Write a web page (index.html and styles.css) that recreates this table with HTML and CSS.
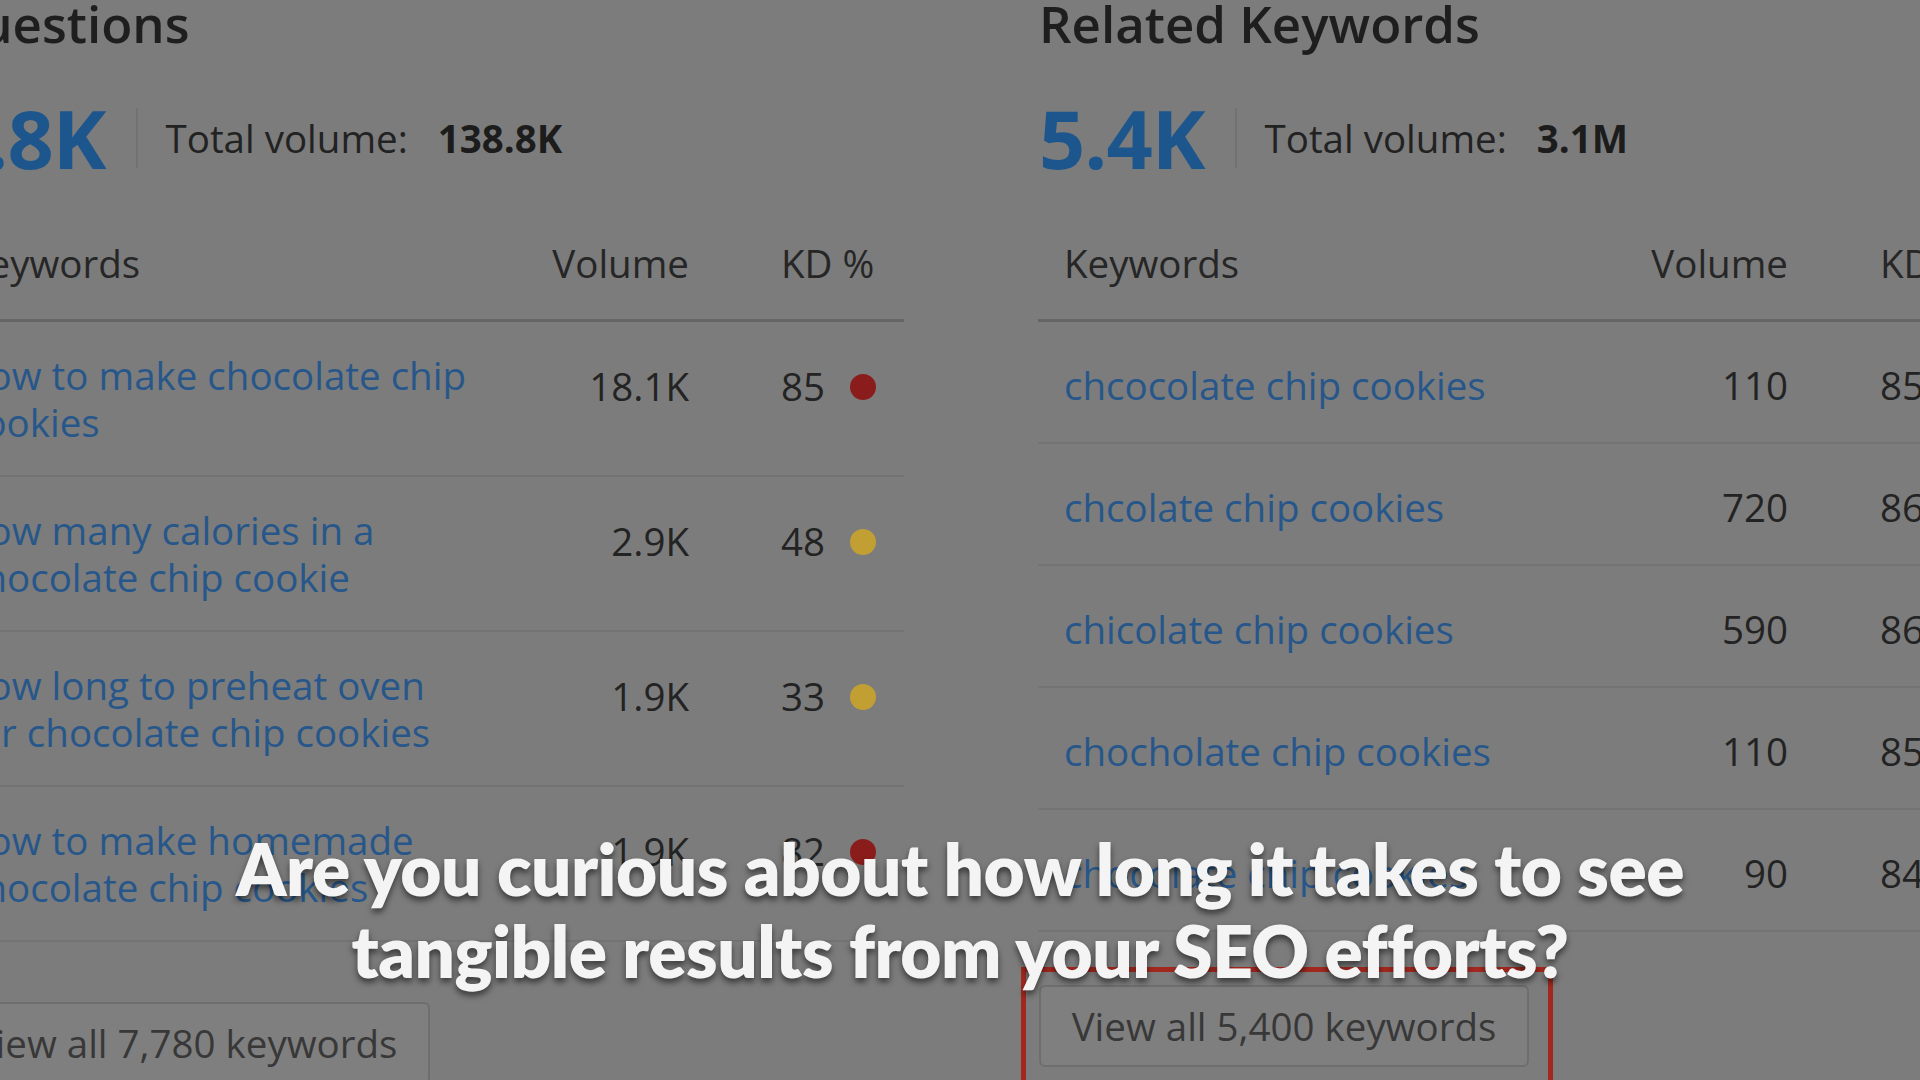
FILE: index.html
```html
<!DOCTYPE html>
<html lang="en">
<head>
<meta charset="utf-8">
<title>Keyword Magic</title>
<link rel="stylesheet" href="styles.css">
</head>
<body>
<div class="stage">
  <section class="panel panel-q">
    <h2 class="title">Questions</h2>
    <div class="stats">
      <span class="big">7.8K</span>
      <span class="divider"></span>
      <span class="tv-label">Total volume:</span>
      <span class="tv-value">138.8K</span>
    </div>
    <div class="thead">
      <span class="c-kw">Keywords</span>
      <span class="c-vol">Volume</span>
      <span class="c-kd">KD %</span>
    </div>
    <div class="row">
      <a class="c-kw link">how to make chocolate chip cookies</a>
      <span class="c-vol">18.1K</span>
      <span class="c-kd">85<i class="dot red"></i></span>
    </div>
    <div class="row">
      <a class="c-kw link">how many calories in a chocolate chip cookie</a>
      <span class="c-vol">2.9K</span>
      <span class="c-kd">48<i class="dot yellow"></i></span>
    </div>
    <div class="row">
      <a class="c-kw link">how long to preheat oven for chocolate chip cookies</a>
      <span class="c-vol">1.9K</span>
      <span class="c-kd">33<i class="dot yellow"></i></span>
    </div>
    <div class="row">
      <a class="c-kw link">how to make homemade chocolate chip cookies</a>
      <span class="c-vol">1.9K</span>
      <span class="c-kd">82<i class="dot red"></i></span>
    </div>
    <div class="btn-wrap">
      <button class="btn">View all 7,780 keywords</button>
    </div>
  </section>

  <section class="panel panel-r">
    <h2 class="title">Related Keywords</h2>
    <div class="stats">
      <span class="big">5.4K</span>
      <span class="divider"></span>
      <span class="tv-label">Total volume:</span>
      <span class="tv-value">3.1M</span>
    </div>
    <div class="thead">
      <span class="c-kw">Keywords</span>
      <span class="c-vol">Volume</span>
      <span class="c-kd">KD %</span>
    </div>
    <div class="row">
      <a class="c-kw link">chcocolate chip cookies</a>
      <span class="c-vol">110</span>
      <span class="c-kd">85<i class="dot red"></i></span>
    </div>
    <div class="row">
      <a class="c-kw link">chcolate chip cookies</a>
      <span class="c-vol">720</span>
      <span class="c-kd">86<i class="dot red"></i></span>
    </div>
    <div class="row">
      <a class="c-kw link">chicolate chip cookies</a>
      <span class="c-vol">590</span>
      <span class="c-kd">86<i class="dot red"></i></span>
    </div>
    <div class="row">
      <a class="c-kw link">chocholate chip cookies</a>
      <span class="c-vol">110</span>
      <span class="c-kd">85<i class="dot red"></i></span>
    </div>
    <div class="row">
      <a class="c-kw link">chocolate chip cookies</a>
      <span class="c-vol">90</span>
      <span class="c-kd">84<i class="dot red"></i></span>
    </div>
    <div class="btn-wrap highlighted">
      <button class="btn">View all 5,400 keywords</button>
    </div>
  </section>
</div>

<p class="caption">Are you curious about how long it takes to see<br>tangible results from your SEO efforts?</p>
</body>
</html>
```

FILE: styles.css
```css
html, body {
  margin: 0;
  padding: 0;
  width: 1920px;
  height: 1080px;
  overflow: hidden;
  background: #7c7c7c;
}

body {
  position: relative;
  font-family: "Open Sans", "Liberation Sans", sans-serif;
  color: #1f1f1f;
}

.stage {
  display: flex;
  align-items: flex-start;
  gap: 134px;
  margin-left: -61px;
  height: 1080px;
  overflow: hidden;
}

.panel {
  flex: 0 0 965px;
  width: 965px;
  display: flex;
  flex-direction: column;
}

.panel > * {
  flex-shrink: 0;
}

.title {
  margin: -7px 0 0 1px;
  font-size: 51px;
  line-height: 60px;
  font-weight: 600;
  color: #1e1e1e;
}

.stats {
  display: flex;
  align-items: center;
  height: 80px;
  margin-top: 45px;
  padding-left: 1px;
}

.big {
  font-size: 81px;
  line-height: 80px;
  font-weight: 700;
  color: #1d568d;
  letter-spacing: -1px;
}

.divider {
  width: 2px;
  height: 60px;
  background: #727272;
  margin: 0 28px 0 30px;
}

.tv-label {
  font-size: 38.5px;
  color: #222;
}

.tv-value {
  font-size: 38.5px;
  font-weight: 700;
  color: #1c1c1c;
  margin-left: 30px;
}

.thead {
  display: flex;
  align-items: center;
  margin-top: 60px;
  height: 50px;
  padding-bottom: 31px;
  border-bottom: 3px solid #656565;
  font-size: 38.5px;
  color: #262626;
}

.c-kw {
  flex: 0 0 541px;
  padding-left: 26px;
  box-sizing: border-box;
}

.c-vol {
  flex: 0 0 209px;
  text-align: right;
}

.c-kd {
  flex: 0 0 auto;
  padding-left: 92px;
  display: flex;
  align-items: center;
}

.row {
  display: flex;
  align-items: center;
  box-sizing: border-box;
  height: 122px;
  padding-top: 7px;
  border-bottom: 2px solid #737373;
  font-size: 38.5px;
  line-height: 47px;
  color: #232323;
}

.panel-q .row {
  height: 155px;
  padding-top: 0;
}

.panel-q .row .c-vol,
.panel-q .row .c-kd {
  margin-bottom: 24px;
}

.link {
  color: #27578a;
  text-decoration: none;
}

.dot {
  display: inline-block;
  width: 26px;
  height: 26px;
  border-radius: 50%;
  margin-left: 25px;
}

.dot.red { background: #8a1d1b; }
.dot.yellow { background: #c29f33; }

.btn-wrap {
  position: relative;
  margin-top: 60px;
  margin-left: 1px;
  width: 490px;
}

.panel-r .btn-wrap {
  margin-top: 53px;
}

.btn {
  display: block;
  box-sizing: border-box;
  width: 490px;
  height: 82px;
  border: 2px solid #6e6e6e;
  border-radius: 6px;
  background: #7f7f7f;
  font-family: "Open Sans", "Liberation Sans", sans-serif;
  font-size: 38.5px;
  color: #383838;
  padding: 0;
}

.highlighted::after {
  content: "";
  position: absolute;
  left: -18px;
  right: -24px;
  top: -18px;
  height: 113px;
  border: 5px solid #a2281f;
  border-bottom: none;
  pointer-events: none;
}

.caption {
  position: absolute;
  left: 0;
  right: 0;
  top: 828px;
  margin: 0;
  text-align: center;
  font-family: "Lato", "Open Sans", sans-serif;
  font-weight: 800;
  font-size: 71px;
  line-height: 82px;
  letter-spacing: -0.5px;
  color: #f4f4f4;
  text-shadow: 0 4px 6px rgba(0, 0, 0, 0.55);
}
```
